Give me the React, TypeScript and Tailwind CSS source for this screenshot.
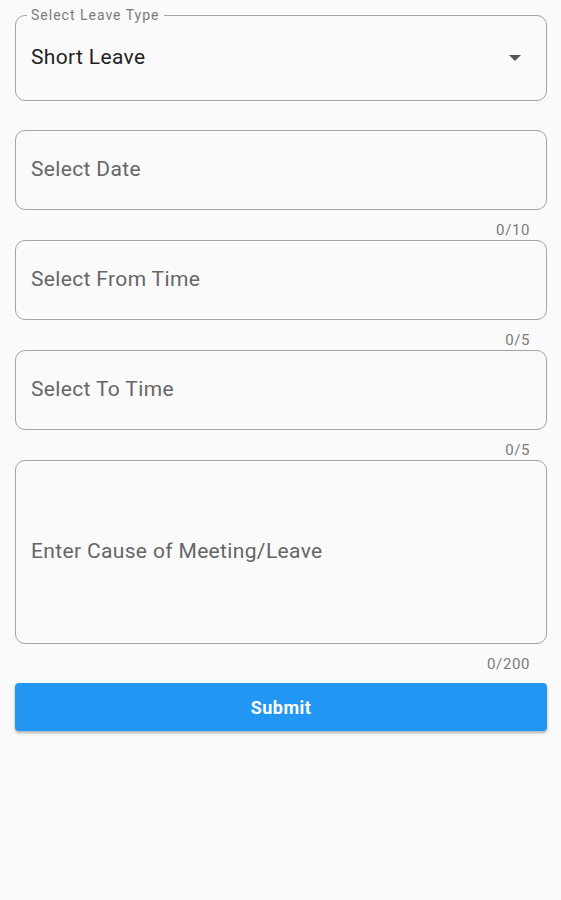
import { useState } from 'react';

function Counter({ text }: { text: string }) {
  return (
    <div className="h-[30px] pt-[12px] pr-[17px] text-right text-[15px] leading-[17px] tracking-[0.6px] text-[#7a7a7a]">
      {text}
    </div>
  );
}

function Field({ placeholder, tall }: { placeholder: string; tall?: boolean }) {
  return (
    <div
      className={[
        'flex items-center rounded-[10px] border border-[#a3a3a3] px-[15px]',
        tall ? 'h-[184px]' : 'h-[80px]',
      ].join(' ')}
    >
      <span className="text-[21px] tracking-[0.35px] text-[#666666]">{placeholder}</span>
    </div>
  );
}

export default function App() {
  const [leaveType] = useState('Short Leave');

  return (
    <div className="min-h-[900px] bg-[#fafafa] pl-[15px] pr-[14px] pt-[15px]" style={{ fontFamily: 'Roboto, "Noto Sans", sans-serif' }}>
      {/* Leave type */}
      <div className="relative flex h-[86px] items-center justify-between rounded-[10px] border border-[#a3a3a3] pl-[15px] pr-[25px]">
        <span className="absolute left-[11px] top-[-9px] bg-[#fafafa] px-[4px] text-[14px] leading-[16px] tracking-[1px] text-[#7a7a7a]">
          Select Leave Type
        </span>
        <span className="text-[21px] tracking-[0.35px] text-[#1f1f1f]">{leaveType}</span>
        <svg width="12" height="6" viewBox="0 0 12 6">
          <path d="M0 0 L12 0 L6 6 Z" fill="#555555" />
        </svg>
      </div>

      <div className="h-[29px]" />

      <Field placeholder="Select Date" />
      <Counter text="0/10" />
      <Field placeholder="Select From Time" />
      <Counter text="0/5" />
      <Field placeholder="Select To Time" />
      <Counter text="0/5" />
      <Field placeholder="Enter Cause of Meeting/Leave" tall />
      <Counter text="0/200" />

      <button className="mt-[9px] flex h-[48px] w-full items-center justify-center rounded-[4px] bg-[#2196f3] text-[18px] font-bold tracking-[0.5px] text-white shadow-[0_2px_3px_rgba(0,0,0,0.3)]">
        Submit
      </button>
    </div>
  );
}
